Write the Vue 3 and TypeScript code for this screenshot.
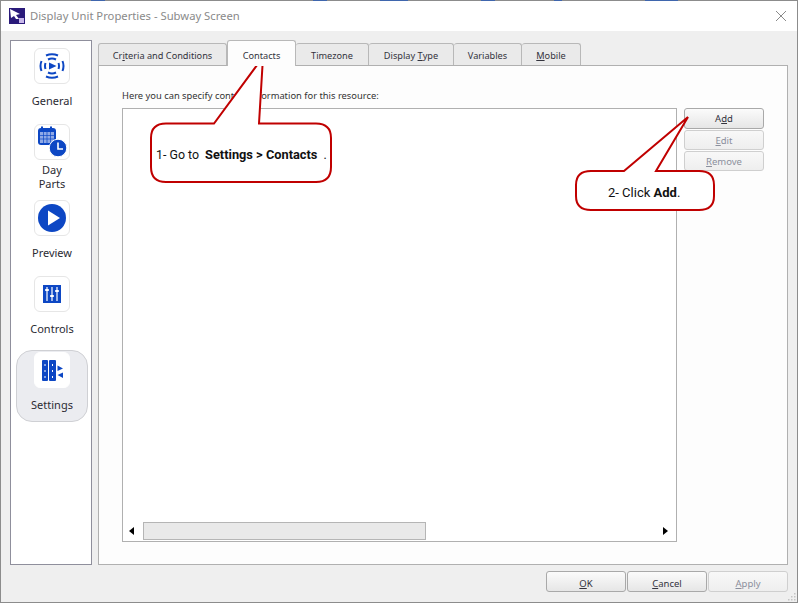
<template>
  <div class="window">
    <span v-for="mark in topMarks" :key="mark.x" class="edge-mark" :style="{ left: mark.x + 'px', width: mark.w + 'px' }"></span>
    <div class="titlebar">
      <svg class="app-icon" width="16" height="16" viewBox="0 0 16 16">
        <rect width="16" height="16" fill="#2a1a7a" />
        <path d="M1 1 L11 6 L7 7 L10 11 L7 11 L5 8 L2 10 Z" fill="#fff" />
        <rect x="10" y="10" width="5" height="5" fill="#c9b8ea" />
      </svg>
      <span class="title">Display Unit Properties - Subway Screen</span>
      <svg class="close" width="12" height="12" viewBox="0 0 12 12">
        <path d="M1 1 L11 11 M11 1 L1 11" stroke="#8a8a8a" stroke-width="1" fill="none" />
      </svg>
    </div>

    <div class="main">
      <nav class="side">
        <div v-for="item in navItems" :key="item.id" class="nav-item" :class="{ active: item.id === 'settings' }">
          <div class="nav-icon">
            <svg v-if="item.id === 'general'" width="26" height="26" viewBox="0 0 26 26" fill="none" stroke="#0d47c4" stroke-width="2">
              <path d="M10 9.5 L17.5 13 L10 16.5 Z" fill="#0d47c4" stroke="none" />
              <path d="M9 6.5 Q13 4.5 17 6.5 M7 2.5 Q13 0 19 2.5" />
              <path d="M9 19.5 Q13 21.5 17 19.5 M7 23.5 Q13 26 19 23.5" />
              <path d="M6.5 10 Q5.5 13 6.5 16 M2.5 8 Q0.5 13 2.5 18 M19.5 10 Q20.5 13 19.5 16 M23.5 8 Q25.5 13 23.5 18" />
            </svg>
            <svg v-else-if="item.id === 'parts'" width="34" height="34" viewBox="1 1 34 34">
              <rect x="4" y="4" width="18" height="17" rx="3" fill="#0d47c4" />
              <rect x="7" y="2.5" width="2" height="4" fill="#0d47c4" />
              <rect x="16" y="2.5" width="2" height="4" fill="#0d47c4" />
              <rect x="6" y="8" width="14" height="11" fill="#8fa9e6" />
              <path d="M9.5 8 V19 M13 8 V19 M16.5 8 V19 M6 11.5 H20 M6 15 H20" stroke="#0d47c4" stroke-width=".7" />
              <circle cx="24" cy="24" r="8.8" fill="#0d47c4" stroke="#fff" stroke-width="1" />
              <path d="M24 18.5 V25 H29" stroke="#fff" stroke-width="1.6" fill="none" />
            </svg>
            <svg v-else-if="item.id === 'preview'" width="28" height="28" viewBox="0 0 28 28">
              <circle cx="14" cy="14" r="14" fill="#0d47c4" />
              <path d="M10 6.5 L22 14 L10 21.5 Z" fill="#fff" />
            </svg>
            <svg v-else-if="item.id === 'controls'" width="18" height="18" viewBox="0 0 18 18">
              <rect width="18" height="18" fill="#0d47c4" />
              <path d="M4 2 V16 M9 2 V16 M14 2 V16" stroke="#fff" stroke-width="1.2" />
              <path d="M2.2 5 H5.8 M7.2 11 H10.8 M12.2 6 H15.8" stroke="#fff" stroke-width="2" />
            </svg>
            <svg v-else width="21" height="21" viewBox="0 0 21 21">
              <rect x="0" y="0" width="6" height="21" rx="1" fill="#0d47c4" />
              <rect x="7" y="0" width="7" height="21" rx="1" fill="#0d47c4" />
              <path d="M3 4 V6 M3 10 V12 M3 16 V18 M10.5 4 V6 M10.5 10 V12 M10.5 16 V18" stroke="#fff" stroke-width="1" />
              <path d="M15.5 5.5 L21 8.5 L15.5 11 Z M21 12.5 L15.5 15 L21 18 Z" fill="#0d47c4" />
            </svg>
          </div>
          <div class="nav-label">
            <span v-for="line in item.lines" :key="line">{{ line }}</span>
          </div>
        </div>
      </nav>

      <section class="content">
        <div class="tabs">
          <div v-for="tab in tabs" :key="tab.name" class="tab" :class="{ selected: tab.name === 'Contacts' }" :style="{ width: tab.width + 'px' }">
            {{ tab.before }}<u>{{ tab.key }}</u>{{ tab.after }}
          </div>
        </div>
        <div class="pane">
          <p class="hint">Here you can specify contact information for this resource:</p>
          <div class="pane-row">
            <div class="list">
              <div class="list-body"></div>
              <div class="hscroll">
                <span class="arrow left"></span>
                <div class="track"><div class="thumb"></div></div>
                <span class="arrow right"></span>
              </div>
            </div>
            <div class="side-btns">
              <button class="btn"><span>A<u>d</u>d</span></button>
              <button class="btn" disabled><span><u>E</u>dit</span></button>
              <button class="btn" disabled><span><u>R</u>emove</span></button>
            </div>
          </div>
        </div>
      </section>
    </div>

    <div class="footer">
      <button class="btn wide"><span><u>O</u>K</span></button>
      <button class="btn wide"><span><u>C</u>ancel</span></button>
      <button class="btn wide" disabled><span><u>A</u>pply</span></button>
    </div>

    <svg class="grip" width="10" height="10" viewBox="0 0 10 10" fill="#c4c4c4">
      <rect x="7" y="1" width="1.5" height="1.5" />
      <rect x="4" y="4" width="1.5" height="1.5" />
      <rect x="7" y="4" width="1.5" height="1.5" />
      <rect x="1" y="7" width="1.5" height="1.5" />
      <rect x="4" y="7" width="1.5" height="1.5" />
      <rect x="7" y="7" width="1.5" height="1.5" />
    </svg>

    <!-- annotations drawn over the dialog -->
    <svg class="callouts" width="798" height="603" viewBox="0 0 798 603" fill="#fff" stroke="#c00000" stroke-width="2">
      <path d="M166 123.5 H214 L263 57 L259 123.5 H316 Q331 123.5 331 138 V167 Q331 182 316 182 H166 Q151 182 151 167 V138 Q151 123.5 166 123.5 Z" />
      <path d="M591 171 H624 L688 117 L656 171 H699 Q714 171 714 185 V196 Q714 210 699 210 H591 Q576 210 576 196 V185 Q576 171 591 171 Z" />
    </svg>
    <div class="note note-one">1- Go to<b>Settings &gt; Contacts</b>.</div>
    <div class="note note-two">2- Click <b>Add</b>.</div>
  </div>
</template>

<script setup lang="ts">
interface NavItem {
  id: string
  lines: string[]
}

interface Tab {
  name: string
  before: string
  key: string
  after: string
  width: number
}

const navItems: NavItem[] = [
  { id: 'general', lines: ['General'] },
  { id: 'parts', lines: ['Day', 'Parts'] },
  { id: 'preview', lines: ['Preview'] },
  { id: 'controls', lines: ['Controls'] },
  { id: 'settings', lines: ['Settings'] }
]

const tabs: Tab[] = [
  { name: 'Criteria', before: 'Cr', key: 'i', after: 'teria and Conditions', width: 129 },
  { name: 'Contacts', before: 'Contacts', key: '', after: '', width: 69 },
  { name: 'Timezone', before: 'Timezone', key: '', after: '', width: 73 },
  { name: 'Display', before: 'Display ', key: 'T', after: 'ype', width: 85 },
  { name: 'Variables', before: 'Variables', key: '', after: '', width: 68 },
  { name: 'Mobile', before: '', key: 'M', after: 'obile', width: 59 }
]

// bits of the window behind the dialog, showing along its top edge
const topMarks = [
  { x: 90, w: 14 },
  { x: 312, w: 14 },
  { x: 379, w: 28 },
  { x: 480, w: 14 },
  { x: 553, w: 8 },
  { x: 644, w: 33 }
]
</script>

<style>
html,
body {
  margin: 0;
  background: #fff;
}
</style>

<style scoped>
.window {
  position: relative;
  width: 798px;
  height: 603px;
  box-sizing: border-box;
  border: 1px solid #8c8c8c;
  background: #efefef;
  font-family: "Noto Sans", "Open Sans", sans-serif;
  font-size: 9.2px;
  color: #222;
  display: flex;
  flex-direction: column;
}

.edge-mark {
  position: absolute;
  top: -1px;
  height: 1px;
  background: #3f66ad;
  z-index: 2;
}

.titlebar {
  height: 30px;
  flex: none;
  background: #fff;
  display: flex;
  align-items: center;
  padding: 0 10px 0 8px;
}

.title {
  margin-left: 5px;
  margin-bottom: 2px;
  font-size: 11.25px;
  color: #8a8a8a;
}

.close {
  margin-left: auto;
}

.main {
  flex: 1;
  display: flex;
  gap: 6px;
  padding: 9px 9px 0 9px;
}

.side {
  width: 82px;
  height: 525px;
  box-sizing: border-box;
  border: 1px solid #8f8f9c;
  background: #fff;
  padding: 5px 0 0 5px;
  display: flex;
  flex-direction: column;
  gap: 4px;
}

.nav-item {
  width: 72px;
  height: 72px;
  box-sizing: border-box;
  padding-top: 1px;
  display: flex;
  flex-direction: column;
  align-items: center;
  border: 1px solid transparent;
  border-radius: 16px;
}

.nav-item.active {
  background: #ebecf0;
  border-color: #cfd0d4;
}

.nav-item.active .nav-icon {
  border-color: #fff;
}

.nav-icon {
  width: 36px;
  height: 36px;
  flex: none;
  box-sizing: border-box;
  border: 1px solid #e6e6e6;
  border-radius: 6px;
  background: #fff;
  display: flex;
  align-items: center;
  justify-content: center;
}

.nav-label {
  margin-top: 2px;
  height: 30px;
  display: flex;
  flex-direction: column;
  justify-content: center;
  align-items: center;
  font-size: 11px;
  line-height: 14px;
  color: #2b2b33;
}

.content {
  flex: 1;
  display: flex;
  flex-direction: column;
}

.tabs {
  height: 25px;
  flex: none;
  display: flex;
  align-items: flex-end;
  position: relative;
  z-index: 1;
}

.tab {
  height: 22px;
  box-sizing: border-box;
  padding-top: 2px;
  border: 1px solid #b8b8b8;
  border-bottom: none;
  border-left-width: 0;
  border-radius: 3px 3px 0 0;
  background: #eaeaea;
  display: flex;
  align-items: center;
  justify-content: center;
  white-space: pre;
  color: #33333d;
}

.tab:first-child {
  border-left-width: 1px;
}

.tab.selected {
  height: 26px;
  margin-bottom: -1px;
  background: #fdfdfd;
  border-left-width: 1px;
  padding-top: 3px;
}

.pane {
  width: 690px;
  height: 500px;
  box-sizing: border-box;
  border: 1px solid #b0b0b0;
  background: #fdfdfd;
  padding: 23px 23px 22px 23px;
  display: flex;
  flex-direction: column;
}

.hint {
  margin: 0;
  height: 19px;
  line-height: 14px;
  font-size: 9.35px;
  color: #333;
}

.pane-row {
  flex: 1;
  display: flex;
  gap: 7px;
}

.list {
  width: 555px;
  box-sizing: border-box;
  border: 1px solid #b0b0b0;
  background: #fff;
  display: flex;
  flex-direction: column;
}

.list-body {
  flex: 1;
}

.hscroll {
  height: 20px;
  flex: none;
  display: flex;
  align-items: center;
  padding: 0 8px 0 6px;
}

.track {
  flex: 1;
  margin: 0 8px 0 9px;
}

.thumb {
  width: 283px;
  height: 18px;
  box-sizing: border-box;
  border: 1px solid #b5b5b5;
  background: #e9e9e9;
}

.arrow {
  width: 0;
  height: 0;
  border-top: 4px solid transparent;
  border-bottom: 4px solid transparent;
}

.arrow.left {
  border-right: 5px solid #000;
}

.arrow.right {
  border-left: 5px solid #000;
}

.side-btns {
  display: flex;
  flex-direction: column;
  gap: 1px;
}

.btn {
  width: 80px;
  height: 21px;
  padding: 0;
  box-sizing: border-box;
  border: 1px solid #a9a9a9;
  border-radius: 3px;
  background: linear-gradient(#fbfbfb, #e6e6e6);
  font: inherit;
  font-size: 9.5px;
  color: #33333d;
}

.side-btns .btn:disabled {
  height: 20px;
}

.btn:disabled {
  border-color: #cfcfcf;
  background: linear-gradient(#f8f8f8, #eeeeee);
  color: #8b8f9c;
}

.footer {
  flex: none;
  height: 37px;
  box-sizing: border-box;
  display: flex;
  justify-content: flex-end;
  gap: 1px;
  padding: 6px 9px 0 0;
}

.btn.wide {
  width: 80px;
  padding-top: 3px;
}

.grip {
  position: absolute;
  right: 0;
  bottom: 0;
}

.callouts {
  position: absolute;
  left: -1px;
  top: -1px;
  pointer-events: none;
}

.note {
  position: absolute;
  font-family: Roboto, "Liberation Sans", sans-serif;
  line-height: 16px;
  color: #111;
  white-space: pre;
}

.note b {
  font-weight: 700;
}

.note-one {
  left: 155px;
  top: 146px;
  font-size: 12.4px;
}

.note-one b {
  margin: 0 6px 0 6px;
  font-size: 12.8px;
}

.note-two {
  left: 607px;
  top: 184px;
  font-size: 13px;
}
</style>
